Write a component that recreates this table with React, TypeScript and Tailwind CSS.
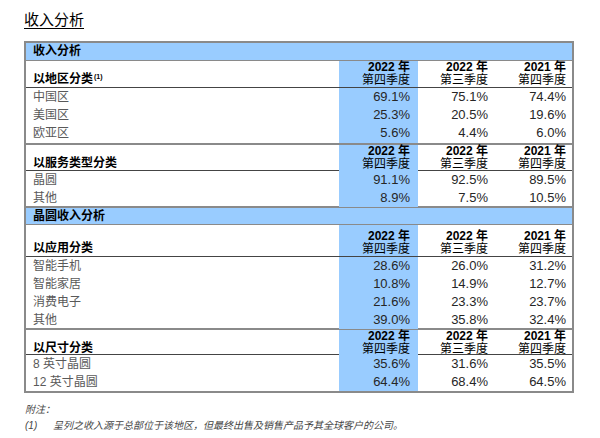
const font = "font-['Liberation_Sans','Noto_Sans_CJK_SC',sans-serif]"
const cols = "grid grid-cols-[313px_79px_78px_78px]"

type Row = { label: string; values: string[] }

const heads = [
  ["2022 年", "第四季度"],
  ["2022 年", "第三季度"],
  ["2021 年", "第四季度"],
]

function BlueRow({ title, top }: { title: string; top?: boolean }) {
  return (
    <div
      className={`border-b border-[#8a8a8a] bg-[#99ccff] pl-[7px] text-[12px] font-bold text-black ${
        top ? "h-[18px] leading-[17px]" : "h-[19px] border-t-2 leading-[16px]"
      }`}
    >
      {title}
    </div>
  )
}

function HeaderRow({ label, sup, h }: { label: string; sup?: string; h: string }) {
  return (
    <div className={`${cols} ${h} border-b border-[#444]`}>
      <div className="flex items-end pl-[7px] text-[12px] font-bold leading-[15px] text-black">
        <span>{label}</span>
        {sup && <span className="relative -top-[6px] ml-[1px] text-[7px] font-bold leading-[8px]">{sup}</span>}
      </div>
      {heads.map((hd, i) => (
        <div
          key={i}
          className={`flex flex-col justify-end pr-[8px] text-right text-[12px] leading-[13px] text-black ${
            i === 0 ? "bg-[#99ccff]" : ""
          }`}
        >
          <span className="font-bold">{hd[0]}</span>
          <span>{hd[1]}</span>
        </div>
      ))}
    </div>
  )
}

function DataRows({ rows, heights }: { rows: Row[]; heights: string[] }) {
  return (
    <div>
      {rows.map((r, idx) => (
        <div key={r.label} className={`${cols} ${heights[idx]}`}>
          <div className="pl-[7px] text-[12px] leading-[18px] text-[#595959]">{r.label}</div>
          {r.values.map((v, i) => (
            <div
              key={i}
              className={`pr-[8px] text-right text-[13px] leading-[18px] text-[#262626] ${
                i === 0 ? "bg-[#99ccff]" : ""
              }`}
            >
              {v}
            </div>
          ))}
        </div>
      ))}
    </div>
  )
}

const region: Row[] = [
  { label: "中国区", values: ["69.1%", "75.1%", "74.4%"] },
  { label: "美国区", values: ["25.3%", "20.5%", "19.6%"] },
  { label: "欧亚区", values: ["5.6%", "4.4%", "6.0%"] },
]

const service: Row[] = [
  { label: "晶圆", values: ["91.1%", "92.5%", "89.5%"] },
  { label: "其他", values: ["8.9%", "7.5%", "10.5%"] },
]

const application: Row[] = [
  { label: "智能手机", values: ["28.6%", "26.0%", "31.2%"] },
  { label: "智能家居", values: ["10.8%", "14.9%", "12.7%"] },
  { label: "消费电子", values: ["21.6%", "23.3%", "23.7%"] },
  { label: "其他", values: ["39.0%", "35.8%", "32.4%"] },
]

const size: Row[] = [
  { label: "8 英寸晶圆", values: ["35.6%", "31.6%", "35.5%"] },
  { label: "12 英寸晶圆", values: ["64.4%", "68.4%", "64.5%"] },
]

export default function App() {
  return (
    <div className={`h-[438px] w-[600px] overflow-hidden bg-white ${font}`}>
      <div className="h-[41px] pl-[24px] pt-[8px]">
        <span className="text-[15px] leading-[20px] text-black underline decoration-[1px] underline-offset-[3px]">
          收入分析
        </span>
      </div>

      <div className="ml-[24px] w-[550px] border-2 border-[#8a8a8a]">
        <BlueRow title="收入分析" top />
        <HeaderRow label="以地区分类" sup="(1)" h="h-[27px]" />
        <DataRows rows={region} heights={["h-[18px]", "h-[18px]", "h-[19px]"]} />

        <div className="border-t-2 border-[#8a8a8a]">
          <HeaderRow label="以服务类型分类" h="h-[26px]" />
        </div>
        <DataRows rows={service} heights={["h-[18px]", "h-[17px]"]} />

        <BlueRow title="晶圆收入分析" />
        <HeaderRow label="以应用分类" h="h-[32px]" />
        <DataRows rows={application} heights={["h-[18px]", "h-[18px]", "h-[18px]", "h-[17px]"]} />

        <div className="border-t-2 border-[#8a8a8a]">
          <HeaderRow label="以尺寸分类" h="h-[25px]" />
        </div>
        <DataRows rows={size} heights={["h-[18px]", "h-[18px]"]} />
      </div>

      <div className="mt-[9px] pl-[25px] text-[10px] italic leading-[16px] text-[#444]">
        <div>附注：</div>
        <div className="flex">
          <span className="w-[28px]">(1)</span>
          <span>呈列之收入源于总部位于该地区，但最终出售及销售产品予其全球客户的公司。</span>
        </div>
      </div>
    </div>
  )
}
